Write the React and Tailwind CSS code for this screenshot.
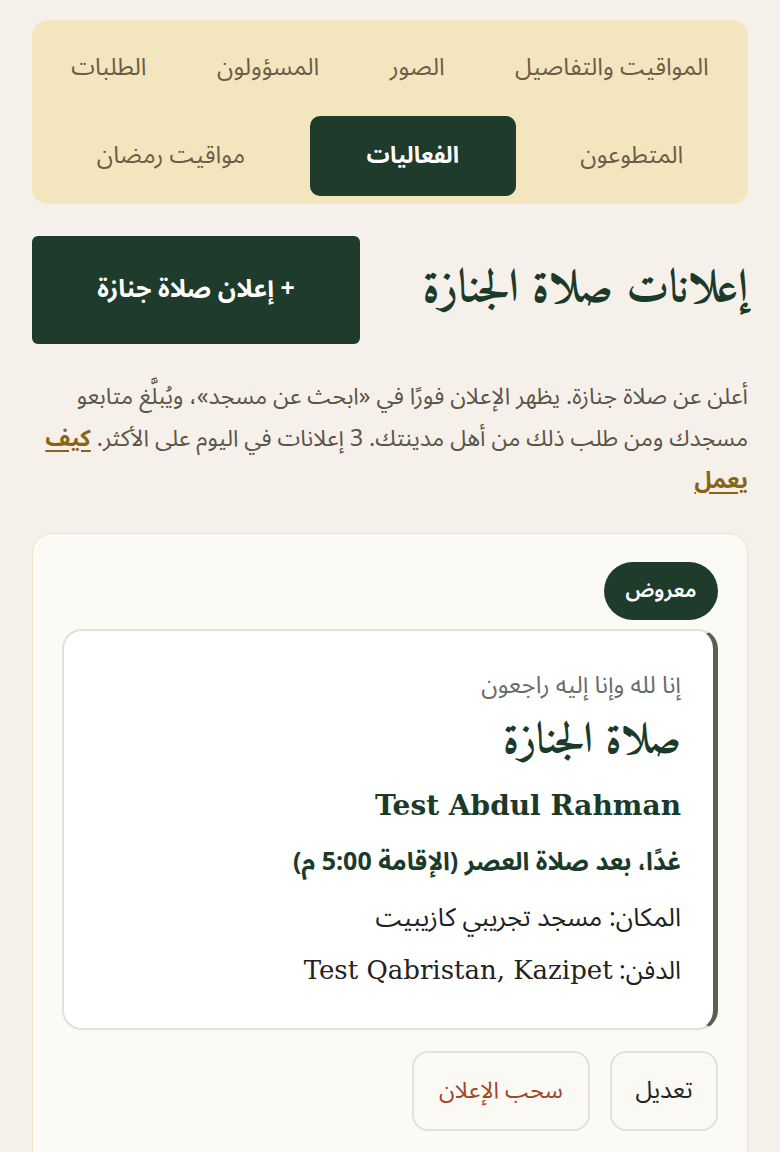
import React from "react";

const body = "font-['Noto_Sans_Arabic',sans-serif]";
const naskh = "font-['Amiri',serif]";
const latin = "font-['DejaVu_Serif',serif]";

const row1 = ["المواقيت والتفاصيل", "الصور", "المسؤولون", "الطلبات"];
const row2 = ["المتطوعون", "الفعاليات", "مواقيت رمضان"];

function Tab({ label, active }) {
  return (
    <div
      className={
        "flex-auto h-[80px] px-5 flex items-center justify-center rounded-[10px] whitespace-nowrap " +
        (active ? "bg-[#1e3b2b] text-white font-bold text-[23px]" : "text-[#6b5d48] text-[24px]")
      }
    >
      {label}
    </div>
  );
}

export default function App() {
  return (
    <div dir="rtl" className={"min-h-[1152px] bg-[#f5f1ea] px-8 pt-5 pb-10 " + body}>
      <div className="bg-[#f3e6bf] rounded-[16px] p-2 flex flex-wrap gap-2">
        {row1.map((t) => (
          <Tab key={t} label={t} />
        ))}
        {row2.map((t) => (
          <Tab key={t} label={t} active={t === "الفعاليات"} />
        ))}
      </div>

      <div className="mt-8 flex items-center justify-between">
        <h1 className={"text-[46px] font-bold text-[#1b3a2a] leading-tight " + naskh}>
          إعلانات صلاة الجنازة
        </h1>
        <button className="w-[328px] h-[108px] rounded-[6px] bg-[#1e3b2b] text-white text-[25px] font-bold">
          + إعلان صلاة جنازة
        </button>
      </div>

      <p className="mt-[32px] text-[23px] leading-[42px] text-[#5d5448]">
        أعلن عن صلاة جنازة. يظهر الإعلان فورًا في «ابحث عن مسجد»، ويُبلَّغ متابعو مسجدك ومن طلب ذلك من أهل مدينتك. 3 إعلانات في اليوم على الأكثر.{" "}
        <a className="text-[#8a6414] font-bold underline underline-offset-4">كيف يعمل</a>
      </p>

      <div className="mt-[31px] bg-[#fcfaf4] border border-[#ece3c9] rounded-[20px] px-[29px] pt-[28px] pb-[40px]">
        <div className="flex justify-start">
          <span className="h-[58px] w-[114px] rounded-full bg-[#1e3b2b] text-white text-[21px] font-semibold flex items-center justify-center">
            معروض
          </span>
        </div>

        <div className="mt-[9px] bg-white border-2 border-[#e2e0da] border-r-[5px] border-r-[#5f5e55] rounded-[20px] pr-[32px] pl-8 pt-[39px] pb-[39px]">
          <p className="text-[24px] text-[#6b6b68] leading-[32px]">إنا لله وإنا إليه راجعون</p>
          <h2 className={"mt-[14px] text-[43px] font-bold text-[#1b3a2a] leading-[52px] " + naskh}>صلاة الجنازة</h2>
          <h3 className={"mt-[16px] text-[28px] font-bold text-[#1b3a2a] leading-[44px] " + latin}>Test Abdul Rahman</h3>
          <p className="mt-[16px] text-[25px] font-bold text-[#1b3a2a] leading-[36px]">غدًا، بعد صلاة العصر (الإقامة 5:00 م)</p>
          <p className="mt-[20px] text-[25.5px] text-[#222] leading-[36px]">المكان: مسجد تجريبي كازيبيت</p>
          <p className="mt-[16px] text-[25px] text-[#222] leading-[36px]">
            الدفن: <span className={"text-[26px] " + latin}>Test Qabristan, Kazipet</span>
          </p>
        </div>

        <div className="mt-[21px] flex gap-5">
          <button className="w-[108px] h-[80px] rounded-[16px] border-2 border-[#e4e1da] bg-[#fbf9f4] text-[24px] text-[#222]">
            تعديل
          </button>
          <button className="w-[178px] h-[80px] rounded-[16px] border-2 border-[#e4e1da] bg-[#fbf9f4] text-[23px] text-[#a2452b]">
            سحب الإعلان
          </button>
        </div>
      </div>
    </div>
  );
}
